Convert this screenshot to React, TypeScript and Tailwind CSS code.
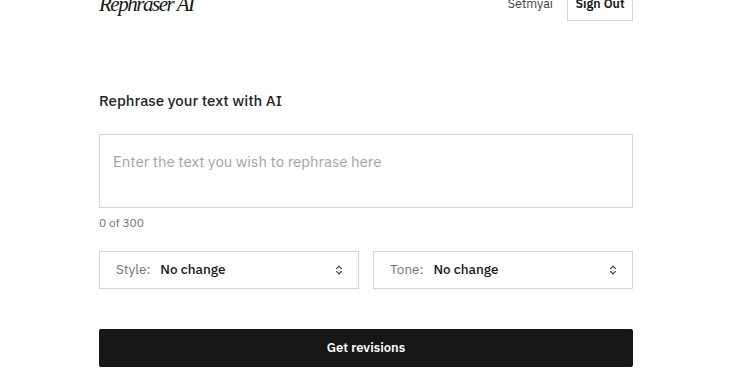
import { useState } from "react";

const font = { fontFamily: '"IBM Plex Sans", Inter, "Noto Sans", sans-serif' };

const Chevrons = () => (
  <svg className="h-3.5 w-3.5 text-gray-700" viewBox="0 0 20 20" fill="none" stroke="currentColor" strokeWidth="1.8" strokeLinecap="round" strokeLinejoin="round">
    <path d="M6.5 8l3.5-3.5L13.5 8" />
    <path d="M6.5 12l3.5 3.5 3.5-3.5" />
  </svg>
);

const Select = ({ label, value }: { label: string; value: string }) => (
  <div className="flex h-[38px] flex-1 items-center justify-between border border-[#d4d4d4] bg-white pl-4 pr-3">
    <div className="flex items-center gap-[10px] text-[13.5px]">
      <span className="text-[#737373]">{label}</span>
      <span className="font-medium text-[#171717]">{value}</span>
    </div>
    <Chevrons />
  </div>
);

export default function App() {
  const [text, setText] = useState("");

  return (
    <div className="h-[375px] w-full overflow-hidden bg-white" style={font}>
      <div className="ml-[99px] w-[534px]">
        <header className="-mt-[16px] flex h-[37px] items-center justify-between">
          <span
            className="pt-[5px] text-[21px] italic tracking-[-0.07em] text-[#171717]"
            style={{ fontFamily: '"Liberation Serif", serif' }}
          >
            Rephraser AI
          </span>
          <div className="flex items-center gap-[14px]">
            <span className="pt-[2px] text-[12.5px] text-[#404040]">Setmyai</span>
            <button className="h-[36px] w-[66px] border border-[#d4d4d4] pt-[2px] text-[12.5px] font-semibold text-[#171717]">
              Sign Out
            </button>
          </div>
        </header>

        <h1 className="mt-[69px] text-[15px] font-medium text-[#262626]">Rephrase your text with AI</h1>

        <textarea
          value={text}
          onChange={(e) => setText(e.target.value)}
          placeholder="Enter the text you wish to rephrase here"
          className="mt-[21px] block h-[74px] w-full resize-none border border-[#d4d4d4] px-[13px] py-[16px] text-[15px] text-[#171717] outline-none placeholder:text-[#a3a3a3]"
        />
        <p className="mt-[6px] text-[12px] text-[#737373]">{text.length} of 300</p>

        <div className="mt-[19px] flex gap-[14px]">
          <Select label="Style:" value="No change" />
          <Select label="Tone:" value="No change" />
        </div>

        <button className="mt-[40px] h-[38px] w-full rounded-[2px] bg-[#171717] text-[13px] font-semibold text-white">
          Get revisions
        </button>
      </div>
    </div>
  );
}
